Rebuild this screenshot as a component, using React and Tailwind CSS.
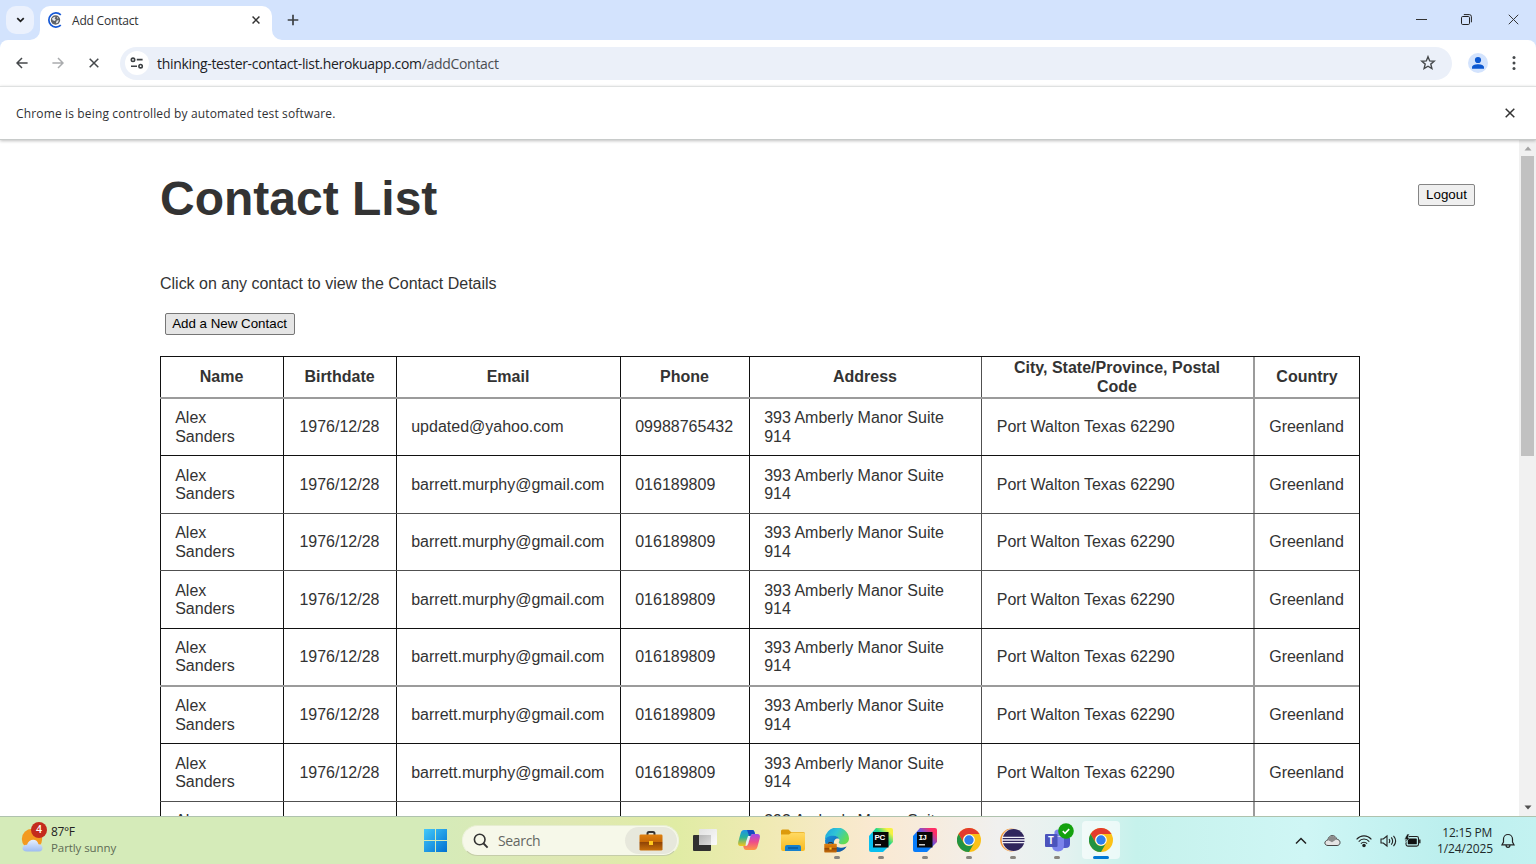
import React from "react";

const UI = "font-['Open_Sans','Noto_Sans',sans-serif]";
const COLS = "grid grid-cols-[123px_113px_224px_129px_232px_272px_107px]";

const headers = ["Name", "Birthdate", "Email", "Phone", "Address", "City, State/Province, Postal Code", "Country"];
const base = ["Alex Sanders", "1976/12/28", "barrett.murphy@gmail.com", "016189809", "393 Amberly Manor Suite 914", "Port Walton Texas 62290", "Greenland"];
const contacts = Array.from({ length: 8 }, (_, i) =>
  i === 0 ? base.map((v, c) => (c === 2 ? "updated@yahoo.com" : c === 3 ? "09988765432" : v)) : base
);

// Height and top rule of each body row
const rowStyles = [
  "h-[58.2px] border-t-2 border-[#9b9b9b]",
  "h-[57.6px] border-t border-[#111]",
  "h-[57.6px] border-t border-[#505050]",
  "h-[57.6px] border-t border-[#505050]",
  "h-[57px] border-t border-[#111]",
  "h-[58.2px] border-t-2 border-[#9b9b9b]",
  "h-[57.6px] border-t border-[#111]",
  "h-[57.6px] border-t border-[#505050]",
];

function cellBorder(c) {
  if (c === 6) return "border-l-2 border-[#9b9b9b]";
  if (c === 5) return "border-l border-[#505050]";
  return "border-l border-[#111]";
}

function cellPadding(c) {
  if (c === 1) return "pl-[15.4px]";
  if (c === 5) return "pl-[14.8px]";
  return "pl-[14.2px]";
}

function Cross({ size, width = 1.6, color = "#333", className = "" }) {
  return (
    <svg width={size} height={size} viewBox="0 0 10 10" className={className}>
      <path d="M0.7 0.7L9.3 9.3M9.3 0.7L0.7 9.3" stroke={color} strokeWidth={width} fill="none" />
    </svg>
  );
}

function TabBar() {
  return (
    <div className="flex h-10 shrink-0 bg-[#d3e3fd]">
      <div className="flex w-10 items-end">
        <div className="mb-1.5 ml-1.5 flex h-7 w-7 items-center justify-center self-end rounded-[10px] bg-[#ebf1fd]">
          <svg width="9" height="6" viewBox="0 0 10 7"><path d="M1.2 1.2L5 5L8.8 1.2" fill="none" stroke="#1f1f1f" strokeWidth="2" /></svg>
        </div>
      </div>
      <div className="relative mt-1.5 flex w-[232px] items-center rounded-t-[10px] bg-white pb-1.5 pl-[7px]">
        <svg className="absolute -left-2.5 bottom-0" width="10" height="10"><path d="M10 0V10H0A10 10 0 0 0 10 0Z" fill="#fff" /></svg>
        <svg className="absolute -right-2.5 bottom-0" width="10" height="10"><path d="M0 0V10H10A10 10 0 0 1 0 0Z" fill="#fff" /></svg>
        <svg width="16" height="16" viewBox="0 0 16 16">
          <path d="M13.8 2.8A7.1 7.1 0 1 0 13.8 13.2" fill="none" stroke="#1558d6" strokeWidth="1.7" />
          <circle cx="8.5" cy="8" r="4.7" fill="#5f6368" />
          <path d="M5 6.4Q7 4.2 8.6 4.8L7.6 6.4L9 7.8L7.6 9L5.6 8.2ZM9.8 8.6L12 8.2L10.6 11L8.8 11.2ZM10 4.8L11.6 6.2L10.2 6.6Z" fill="#e4e7ea" />
        </svg>
        <span className="ml-[9px] pt-0.5 text-[12px] tracking-[-0.2px] text-[#303134]">Add Contact</span>
        <Cross size={8} width={1.9} className="ml-auto mr-3" />
      </div>
      <svg width="12" height="12" viewBox="0 0 12 12" className="ml-[15px] mt-[14px]"><path d="M6 0.7V11.3M0.7 6H11.3" stroke="#3c4043" strokeWidth="1.7" /></svg>
      <div className="ml-auto flex h-[39px] items-center">
        <svg width="11" height="10" className="mr-[34px]"><path d="M0 4.5H11" stroke="#333" /></svg>
        <svg width="11" height="11" viewBox="0 0 11 11" className="mr-9">
          <rect x="0.5" y="2.5" width="8" height="8" rx="1.2" fill="none" stroke="#222" />
          <path d="M2.8 .6H8.3Q10.4 .6 10.4 2.7V8.3" fill="none" stroke="#222" />
        </svg>
        <Cross size={11} width={0.9} className="mr-[17px]" />
      </div>
    </div>
  );
}

function Toolbar() {
  return (
    <div className="h-[46px] shrink-0 bg-[#d3e3fd]">
      <div className="flex h-full items-center rounded-t-lg bg-white">
        <svg width="12" height="12" viewBox="0 0 12 12" className="ml-4"><path d="M11.6 6H1.2M6 1L1 6L6 11" fill="none" stroke="#45484b" strokeWidth="1.5" /></svg>
        <svg width="12" height="12" viewBox="0 0 12 12" className="ml-6"><path d="M.4 6H10.8M6 1L11 6L6 11" fill="none" stroke="#aaacae" strokeWidth="1.5" /></svg>
        <Cross size={10} width={1.5} color="#45484b" className="ml-[25px]" />
        <div className="ml-[21px] flex h-[33px] w-[1332px] items-center rounded-full bg-[#ebf0f9] pl-[5px]">
          <div className="flex h-6 w-6 items-center justify-center rounded-full bg-white">
            <svg width="14" height="12" viewBox="0 0 14 12" fill="none" stroke="#3c4043" strokeWidth="1.6">
              <circle cx="3" cy="2.8" r="1.7" /><path d="M6.8 2.6H12.6M1 9.3H7" /><circle cx="10.6" cy="9.2" r="1.7" />
            </svg>
          </div>
          <span className="ml-2 whitespace-nowrap text-[14px] tracking-[-0.32px] text-[#4a4d51]"><span className="text-[#202124]">thinking-tester-contact-list.herokuapp.com</span>/addContact</span>
          <svg width="16" height="16" viewBox="0 0 16 16" className="ml-auto mr-4">
            <path d="M8 1.7L9.7 5.9L14.2 6.2L10.8 9.1L11.9 13.6L8 11.2L4.1 13.6L5.2 9.1L1.8 6.2L6.3 5.9Z" fill="none" stroke="#45484b" strokeWidth="1.4" />
          </svg>
        </div>
        <svg width="20" height="20" viewBox="0 0 20 20" className="ml-4">
          <circle cx="10" cy="10" r="10" fill="#d3e3fd" /><circle cx="10" cy="7" r="3.1" fill="#0b57d0" />
          <path d="M4 15.7V14.3C4 12 7.5 11.2 10 11.2S16 12 16 14.3V15.7Z" fill="#0b57d0" />
        </svg>
        <svg width="4" height="14" viewBox="0 0 4 14" className="ml-6" fill="#45484b"><circle cx="2" cy="1.6" r="1.5" /><circle cx="2" cy="7" r="1.5" /><circle cx="2" cy="12.4" r="1.5" /></svg>
      </div>
    </div>
  );
}

function Page() {
  return (
    <main className="flex min-h-0 flex-1 overflow-hidden bg-white font-['Liberation_Sans',Arial,sans-serif] text-[16px] leading-[18.4px] text-[#333]">
      <div className="w-[1519px] overflow-hidden pl-40">
        <header className="flex h-[117px] justify-between pt-[30px]">
          <h1 className="pt-px text-[48px] font-bold leading-[55px]">Contact List</h1>
          <button className="mr-[44px] mt-[14px] h-[22px] w-[57px] rounded-[2px] border border-[#858585] bg-[#efefef] text-[13.333px] leading-[18px] text-black">Logout</button>
        </header>
        <p className="mt-[18px] tracking-[-0.01px]">Click on any contact to view the Contact Details</p>
        <button className="ml-[4.6px] mt-5 block h-[22px] w-[130px] rounded-[2px] border border-[#767676] bg-[#e5e5e5] text-[13.333px] leading-[18px] text-black">Add a New Contact</button>
        <div role="table" className="mt-[20.6px] w-[1200px] border-r border-[#111]">
          <div role="row" className={COLS + " h-[41px] border-t border-[#111] font-bold"}>
            {headers.map((h, c) => (
              <div role="columnheader" key={h} className={"flex items-center justify-center pl-[14px] pr-[15px] pt-px text-center " + cellBorder(c)}>{h}</div>
            ))}
          </div>
          {contacts.map((row, i) => (
            <div role="row" key={i} className={COLS + " " + rowStyles[i]}>
              {row.map((v, c) => (
                <div role="cell" key={c} className={"flex items-center pr-[13px] pt-px " + cellPadding(c) + " " + cellBorder(c)}>{v}</div>
              ))}
            </div>
          ))}
        </div>
      </div>
      <div className="flex w-[17px] flex-col items-center bg-[#f1f1f1]">
        <svg width="8" height="5" className="mt-[6px]"><path d="M.5 4.5L4 .5L7.5 4.5Z" fill="#a3a3a3" /></svg>
        <div className="mt-[5px] h-[300px] w-[13px] bg-[#c1c1c1]" />
        <svg width="8" height="5" className="mb-[6px] mt-auto"><path d="M.5 .5L4 4.5L7.5 .5Z" fill="#505050" /></svg>
      </div>
    </main>
  );
}

function Chrome() {
  return (
    <svg width="24" height="24" viewBox="0 0 24 24">
      <circle cx="12" cy="12" r="12" fill="#fbc116" />
      <path d="M1.6 6A12 12 0 0 1 22.4 6H12A6 6 0 0 0 6.8 15Z" fill="#e33b2e" />
      <path d="M1.6 6A12 12 0 0 0 12 24L17.2 15A6 6 0 0 1 6.8 15Z" fill="#229342" />
      <circle cx="12" cy="12" r="5.8" fill="#fff" /><circle cx="12" cy="12" r="4.7" fill="#2f7fec" />
    </svg>
  );
}

function Briefcase({ width }) {
  return (
    <svg width={width} height={(width * 20) / 24} viewBox="0 0 24 20">
      <defs><linearGradient id="case" x2="0" y2="1"><stop offset="0" stopColor="#df8110" /><stop offset=".45" stopColor="#c86a06" /><stop offset=".5" stopColor="#914507" /><stop offset="1" stopColor="#c9700a" /></linearGradient></defs>
      <path d="M8.5 4V2.8Q8.5 1 10 1H14Q15.5 1 15.5 2.8V4" fill="none" stroke="#333" strokeWidth="2" />
      <rect x=".5" y="3.4" width="23" height="16.2" rx="1.4" fill="url(#case)" />
      <rect x="10" y="10" width="4" height="4" fill="#ffc91f" />
    </svg>
  );
}

function TaskView() {
  return (
    <svg width="24" height="24" viewBox="0 0 24 24">
      <defs>
        <linearGradient id="tv" x2="1" y2="1"><stop stopColor="#b5b5b5" /><stop offset="1" stopColor="#dcdcdc" /></linearGradient>
        <linearGradient id="tvb" x2="1" y2="1"><stop stopColor="#e2e2e2" /><stop offset="1" stopColor="#fbfbfb" /></linearGradient>
      </defs>
      <rect x="0" y="7" width="18" height="16" rx="1" fill="#303030" />
      <rect x="6" y="1" width="18" height="16" rx="1" fill="url(#tvb)" /><rect x="6" y="7" width="12" height="10" fill="url(#tv)" />
    </svg>
  );
}

function Copilot() {
  return (
    <svg width="24" height="24" viewBox="0 0 24 24">
      <defs>
        <linearGradient id="cpa" x2="0" y2="1"><stop stopColor="#1c92e8" /><stop offset=".45" stopColor="#27b29b" /><stop offset="1" stopColor="#f5c51a" /></linearGradient>
        <linearGradient id="cpb" x2="0" y2="1"><stop stopColor="#a04ce8" /><stop offset=".5" stopColor="#ee4d8a" /><stop offset="1" stopColor="#ff9a43" /></linearGradient>
      </defs>
      <path d="M7 2H15.5Q17 2 17.5 4L18 6H15.5Q14 6 13.4 8L11 16Q10.3 18 8.5 18H3.5Q.5 18 1.2 14L3.7 5Q4.5 2 7 2Z" fill="url(#cpa)" />
      <path d="M17 22H9Q7.3 22 6.7 20L6.2 18H8.5Q10.4 18 11 16L13.5 8Q14.2 6 16 6H20.4Q23.6 6 22.8 10L20.4 19Q19.5 22 17 22Z" fill="url(#cpb)" />
      <path d="M10 2H15.5Q17 2 17.5 4L18 6H15.5Q14 6 13.4 8L12.8 10Z" fill="#154ac0" />
      <path d="M13.5 8L11 16Q10.4 18 8.5 18L9 14L11 8Z" fill="#e8eef5" />
    </svg>
  );
}

function Folder() {
  return (
    <svg width="26" height="24" viewBox="0 0 26 24">
      <defs><linearGradient id="fold" x2="0" y2="1"><stop stopColor="#ffda63" /><stop offset="1" stopColor="#f9ba20" /></linearGradient></defs>
      <path d="M1 3Q1 1.5 2.5 1.5H8.5L11 4H23Q25 4 25 6V12H1Z" fill="#dc9a0c" />
      <path d="M1 6.5H9L11.5 4.5H23.5Q25 4.5 25 6V21Q25 23 23 23H3Q1 23 1 21Z" fill="url(#fold)" />
      <path d="M5 23V19Q5 17 7 17H19Q21 17 21 19V23Z" fill="#1680cd" /><path d="M8 20H18" stroke="#0b5394" strokeWidth="1.3" />
    </svg>
  );
}

function Edge() {
  return (
    <div className="relative h-6 w-6">
      <svg width="24" height="24" viewBox="0 0 24 24">
        <defs>
          <linearGradient id="eg" x2="1" y2=".5"><stop stopColor="#1ba0e2" /><stop offset=".5" stopColor="#30c5d5" /><stop offset="1" stopColor="#63dc53" /></linearGradient>
          <linearGradient id="eb" x2="1" y2="1"><stop stopColor="#1b93dc" /><stop offset="1" stopColor="#0c4f9c" /></linearGradient>
        </defs>
        <path d="M0 11.5A12 11.5 0 0 1 24 10.4C24 14.2 21 16.3 17.6 16.3C14.6 16.3 13.2 15 14 13.8C15.6 11.5 13 8.2 9 8.2C4.5 8.2 0 11.5 0 11.5Z" fill="url(#eg)" />
        <path d="M0 12.5C.5 9.3 4.5 7.4 8.8 7.8C11.6 8 13.6 9.4 14.2 11C11 9.6 8.6 12.2 9 15.3C9.6 19.5 15 21 21.7 18.4A12 12 0 0 1 12 24C5 24 0 19 0 12.5Z" fill="url(#eb)" />
      </svg>
      <div className="absolute -left-px top-[14px]"><Briefcase width={13} /></div>
    </div>
  );
}

function JetBrains({ label, intellij }) {
  return (
    <div className="relative h-6 w-6">
      <svg width="24" height="24" viewBox="0 0 24 24">
        <defs>
          <linearGradient id="pc" x1="0" y1="1" x2="1" y2="0"><stop offset=".4" stopColor="#08bff0" /><stop offset=".62" stopColor="#21d789" /><stop offset=".85" stopColor="#f6f142" /></linearGradient>
          <linearGradient id="ij" x1="0" y1="1" x2="1" y2="0"><stop offset=".4" stopColor="#087cfa" /><stop offset=".6" stopColor="#7452d8" /><stop offset=".85" stopColor="#fe2d64" /></linearGradient>
        </defs>
        <path d="M7 0H22Q24 0 24 2V14L14 24H2Q0 24 0 22V8Z" fill={intellij ? "url(#ij)" : "url(#pc)"} />
        <rect x="4" y="4" width="15.5" height="15.5" fill="#080808" />
        <path d="M6 16.8H12" stroke="#fff" strokeWidth="1.2" />
      </svg>
      <span className={"absolute left-[6px] top-[5px] text-[8px] font-bold leading-[9px] text-white " + (intellij ? "font-['Liberation_Mono',monospace] tracking-[-1px]" : "font-['Liberation_Sans',sans-serif] tracking-[-0.3px]")}>{label}</span>
    </div>
  );
}

function Eclipse() {
  return (
    <svg width="25" height="24" viewBox="0 0 25 24">
      <circle cx="11.5" cy="12" r="11.4" fill="#f39a3d" /><circle cx="13" cy="12" r="11.3" fill="#f4e9e5" /><circle cx="13.6" cy="12" r="11" fill="#30265c" />
      <path d="M2 9.4H25M2 12H25M2 14.6H25" stroke="#f1f0f7" strokeWidth="1.3" />
    </svg>
  );
}

function Teams() {
  return (
    <div className="relative h-6 w-[26px]">
      <svg width="26" height="24" viewBox="0 0 26 24">
        <circle cx="14" cy="5" r="3.6" fill="#7b83eb" /><circle cx="22" cy="6" r="2.5" fill="#5059c9" />
        <path d="M18 10H26V16Q26 20 21.5 20H18Z" fill="#5059c9" />
        <path d="M8 9H20V17Q20 23.5 14 23.5T8 17Z" fill="#7b83eb" />
        <rect x="1" y="6" width="12.5" height="13" rx="1" fill="#4b53bc" />
      </svg>
      <span className="absolute left-1 top-[7px] w-[7px] text-center text-[10px] font-bold leading-[11px] text-white">T</span>
      <svg className="absolute -top-[5px] left-[14px]" width="16" height="16"><circle cx="8" cy="8" r="7.8" fill="#13a10e" /><path d="M4.8 8.2L7 10.3L11.2 6.1" fill="none" stroke="#fff" strokeWidth="1.6" /></svg>
    </div>
  );
}

function TaskButton({ children, running, active }) {
  return (
    <div className="flex w-11 flex-col items-center">
      <div className={"flex h-[38px] w-[38px] flex-col items-center rounded pt-[7px] " + (active ? "bg-white/60" : "")}>
        <div className="flex h-6 items-center">{children}</div>
        {running && <div className="mt-[4px] h-[3px] w-1.5 shrink-0 rounded-full bg-[#88857e]" />}
        {active && <div className="mt-[4px] h-[3px] w-4 shrink-0 rounded-full bg-[#0078d4]" />}
      </div>
    </div>
  );
}

function Taskbar() {
  return (
    <footer className="relative z-10 flex h-12 shrink-0 border-t border-[#afc2ae] bg-[linear-gradient(90deg,#d5ebb9_0%,#d5ebb9_28%,#dfe8b3_37%,#e0eca4_44%,#f0eab4_50%,#fae9d2_57%,#f6ecdf_61%,#f0f0ef_65%,#e6f2f0_69%,#c6f2ec_74%,#cff6f5_85%,#bcefee_94%,#c3f2f1_100%)]">
      <div className="flex w-[414px] pl-[21px]">
        <div className="relative mt-[5px] h-8 w-[30px]">
          <svg width="30" height="32" viewBox="0 0 30 32">
            <defs><linearGradient id="cloud" x2="0" y2="1"><stop stopColor="#e6efff" /><stop offset="1" stopColor="#9ebcf1" /></linearGradient></defs>
            <circle cx="11" cy="17" r="10.2" fill="#f39a20" />
            <path d="M6 29.5C-.5 29.5.5 22.5 6 22.8C8 16.5 16 16 17.5 22.2C22.5 22 23 29.5 18 29.5Z" fill="url(#cloud)" />
          </svg>
          <div className="absolute left-[10px] top-0 flex h-4 w-4 items-center justify-center rounded-full bg-[#c42b1c] text-[10.5px] font-semibold text-white">4</div>
        </div>
        <div className="pt-[7px] text-[12px] leading-4">
          <div className="tracking-[-0.4px] text-[#222]">87°F</div>
          <div className="text-[11.5px] tracking-[-0.08px] text-[#5f6b55]">Partly sunny</div>
        </div>
      </div>
      <div className="flex w-12 pl-[10px] pt-3">
        <svg width="23" height="23" viewBox="0 0 23 23">
          <defs><linearGradient id="win" x2="1" y2="1"><stop stopColor="#43c9fa" /><stop offset="1" stopColor="#0070d1" /></linearGradient></defs>
          <path d="M0 0H11V11H0ZM12 0H23V11H12ZM0 12H11V23H0ZM12 12H23V23H12Z" fill="url(#win)" />
        </svg>
      </div>
      <div className="mt-2 flex h-[31px] w-[217px] items-center rounded-full border border-b-[#c5cda9] border-x-[#edf2de] border-t-[#e6edcf] bg-[#f6f8e9] pl-[10px]">
        <svg width="16" height="16" viewBox="0 0 16 16"><circle cx="6.7" cy="6.5" r="5.3" fill="none" stroke="#333" strokeWidth="1.6" /><path d="M10.6 10.5L14.6 14.6" stroke="#333" strokeWidth="1.9" /></svg>
        <span className="ml-[9px] text-[14px] tracking-[-0.35px] text-[#656762]">Search</span>
        <div className="ml-auto mr-[1px] flex h-[27px] w-[52px] items-center justify-center rounded-full bg-[#e7e8dc]"><Briefcase width={24} /></div>
      </div>
      <div className="ml-[3.5px] flex pt-[4px]">
        <TaskButton><TaskView /></TaskButton>
        <TaskButton><Copilot /></TaskButton>
        <TaskButton><Folder /></TaskButton>
        <TaskButton running><Edge /></TaskButton>
        <TaskButton running><JetBrains label="PC" /></TaskButton>
        <TaskButton running><JetBrains label="IJ" intellij /></TaskButton>
        <TaskButton running><Chrome /></TaskButton>
        <TaskButton running><Eclipse /></TaskButton>
        <TaskButton running><Teams /></TaskButton>
        <TaskButton active><Chrome /></TaskButton>
      </div>
      <div className="ml-auto flex items-center pr-[21px]">
        <svg width="12" height="8" viewBox="0 0 12 8" className="mr-[17px]"><path d="M1 6.5L6 1.5L11 6.5" fill="none" stroke="#222" strokeWidth="1.5" /></svg>
        <svg width="17" height="13" viewBox="0 0 17 13" className="mr-[15px]">
          <path d="M4 11.5C0 11.5-.2 6.8 3.8 6C4.8 .2 11.6 .2 12.6 5.2C17.2 5.6 17 11.5 13 11.5Z" fill="#e4e4e4" stroke="#444" strokeWidth="1" />
          <path d="M3.8 6C4.8 .8 11.4 .6 12.6 5.2L8 8.2Z" fill="#8a8a8a" />
        </svg>
        <svg width="16" height="14" viewBox="0 0 16 14" className="mr-2" fill="none" stroke="#222" strokeWidth="1.1">
          <path d="M.6 5.4C4.8.7 11.2.7 15.4 5.4M2.7 7.6C5.7 4.2 10.3 4.2 13.3 7.6M4.9 9.7C6.7 7.7 9.3 7.7 11.1 9.7" /><circle cx="8" cy="11.5" r="1.2" fill="#222" />
        </svg>
        <svg width="17" height="14" viewBox="0 0 17 14" className="mr-[7px]" fill="none" stroke="#222" strokeWidth="1.1">
          <path d="M1 5V9H3.3L7 12V2L3.3 5ZM9 5Q10.5 7 9 9M11.3 3.4Q14 7 11.3 10.6M13.5 1.8Q17.8 7 13.5 12.2" />
        </svg>
        <svg width="17" height="14" viewBox="0 0 17 14">
          <rect x="2" y="2.5" width="12.5" height="9.6" rx="1.8" fill="none" stroke="#222" strokeWidth="1.1" />
          <rect x="3.8" y="4.4" width="9" height="5.9" rx=".6" fill="#111" /><path d="M15.8 5.6V9.3" stroke="#222" strokeWidth="1.4" />
          <path d="M3.2 0L.4 5.2H2.4L1.5 8.6L6 3.4H4L5.4 0Z" fill="#111" stroke="#c4f3f1" strokeWidth=".6" />
        </svg>
        <div className="ml-4 w-[55px] whitespace-nowrap text-right text-[12px] leading-4 text-[#1f2b2b]">
          <div className="tracking-[-0.25px]">12:15 PM</div>
          <div className="tracking-[-0.1px]">1/24/2025</div>
        </div>
        <svg width="14" height="16" viewBox="0 0 14 16" className="ml-[9px]" fill="none" stroke="#222" strokeWidth="1.2">
          <path d="M1 11.8L2.5 9V6A4.5 4.5 0 0 1 11.5 6V9L13 11.8ZM5 12Q5 14.3 7 14.3T9 12" />
        </svg>
      </div>
    </footer>
  );
}

export default function App() {
  return (
    <div className={UI + " flex h-[864px] w-[1536px] flex-col overflow-hidden bg-white"}>
      <TabBar />
      <Toolbar />
      <div className="relative z-10 flex h-[54px] shrink-0 items-center justify-between border-b border-t border-b-[#c8cbca] border-t-[#dfe1e1] bg-white pl-4 pr-[21px] shadow-[0_1px_3px_rgba(0,0,0,0.25)]">
        <span className="pt-0.5 text-[12px] tracking-[0.15px] text-[#303134]">Chrome is being controlled by automated test software.</span>
        <Cross size={10} width={1.5} />
      </div>
      <Page />
      <Taskbar />
    </div>
  );
}
